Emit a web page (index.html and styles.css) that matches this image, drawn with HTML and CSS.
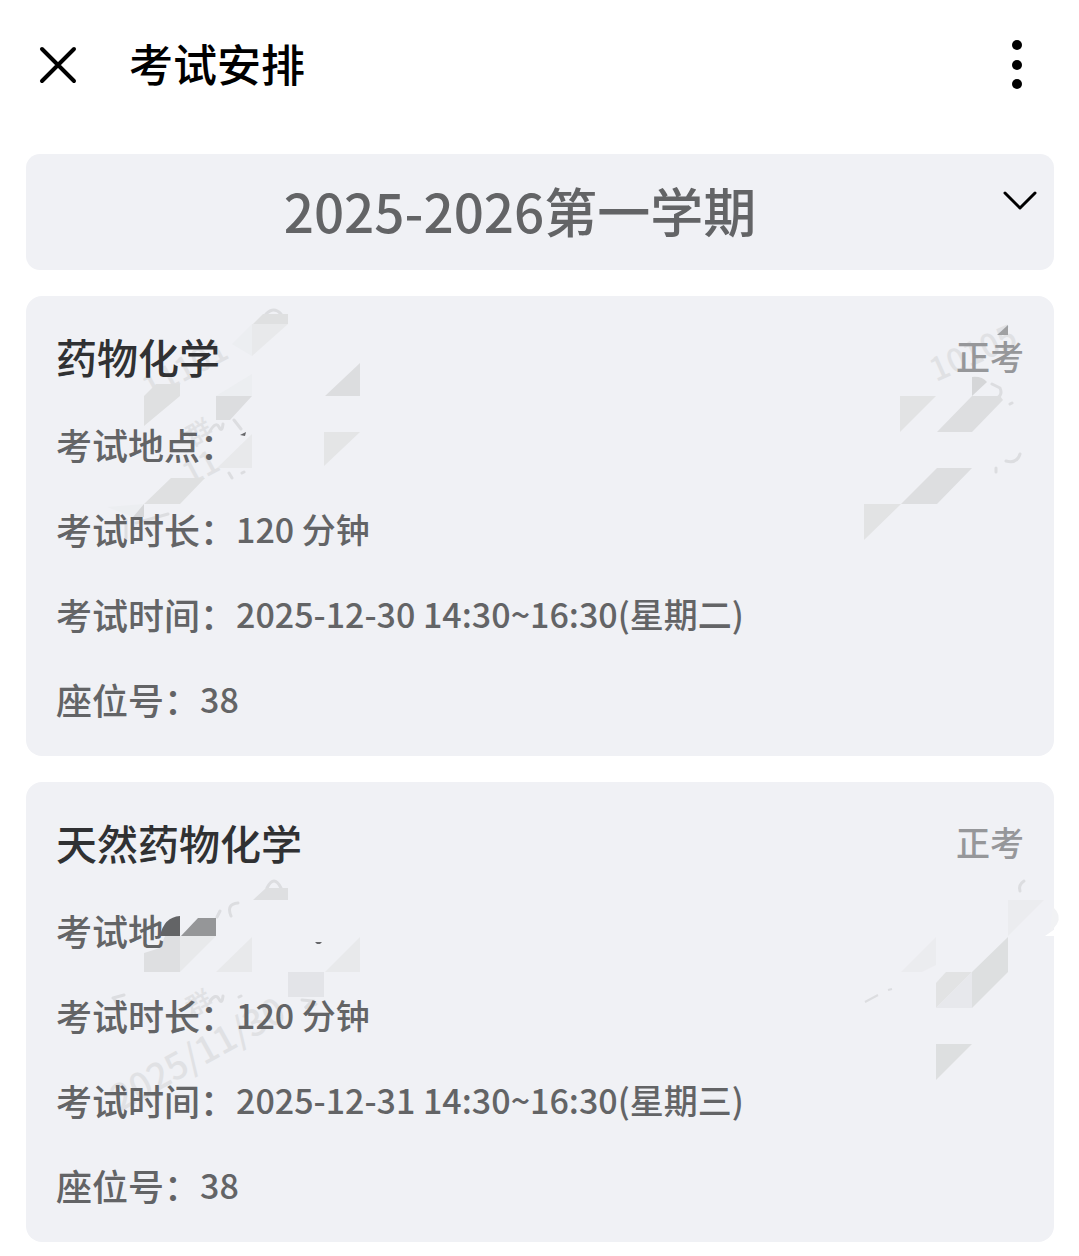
FILE: index.html
```html
<!DOCTYPE html>
<html lang="zh-CN">
<head>
<meta charset="utf-8">
<meta name="viewport" content="width=device-width, initial-scale=1">
<title>考试安排</title>
<link rel="stylesheet" href="styles.css">
</head>
<body>
<header class="topbar">
  <button class="icon-button" type="button" aria-label="关闭">
    <svg width="40" height="40" viewBox="0 0 40 40"><path d="M4 4 36 36M36 4 4 36" fill="none" stroke="#000" stroke-width="4" stroke-linecap="round"/></svg>
  </button>
  <h1 class="topbar-title">考试安排</h1>
  <button class="icon-button" type="button" aria-label="更多">
    <svg width="12" height="52" viewBox="0 0 12 52"><circle cx="6" cy="6" r="5"/><circle cx="6" cy="26" r="5"/><circle cx="6" cy="45" r="5"/></svg>
  </button>
</header>

<main class="content">
  <div class="term">
    <select class="term-select" aria-label="学期">
      <option>2025-2026第一学期</option>
    </select>
    <svg class="term-arrow" width="36" height="20" viewBox="0 0 36 20"><path d="M3 3 18 18 33 3" fill="none" stroke="#000" stroke-width="3" stroke-linecap="round" stroke-linejoin="round"/></svg>
  </div>

  <article class="exam">
    <svg class="marks marks-left" width="380" height="260" viewBox="26 296 380 260" aria-hidden="true">
      <g class="mark-text">
        <text transform="translate(150 400) rotate(-28)">11101</text>
        <text class="mark-small" transform="translate(192 447) rotate(-28)">群</text>
        <text transform="translate(190 486) rotate(-28)">11</text>
      </g>
      <path class="mark-line" d="M266 314Q274 306 281 314M210 431Q216 421 219 427T223 424M234 420 241 429M229 473 232 478M242 473 244 472M136 523 168 514M126 520V538"/>
      <path fill="#dfe0e1" d="M253 324 263 314H288V324ZM144 396 156 384H180V396L144 426ZM144 504 171 478H205L180 504Z"/>
      <path fill="#e8e9eb" d="M252 324H288L252 356ZM217 468 252 434V468Z"/>
      <path fill="#eceef1" d="M232 344 252 324V356ZM216 396 252 374V396ZM107 507 144 504 133 517Z"/>
      <path fill="#dcdddf" d="M216 396H252L230 420H216ZM325 396 360 363V396Z"/>
      <path fill="#e4e5e6" d="M324 432H360L324 466Z"/>
      <path fill="#d5d6d8" d="M133 517 144 504V517Z"/>
      <path fill="#66676a" d="M240 435 246 432 245 436Z"/>
    </svg>
    <svg class="marks marks-right" width="200" height="260" viewBox="854 296 200 260" aria-hidden="true">
      <g class="mark-text"><text transform="translate(936 382) rotate(-24)">10105</text></g>
      <path class="mark-line" d="M1006 461Q1017 464 1020 454M992 384 1000 388Q1003 395 997 398M1010 404 1012 403M996 468V472"/>
      <path fill="#9fa0a2" d="M997 335 1008 325V335Z"/>
      <path fill="#e2e3e4" d="M900 396H936L900 432ZM864 504H901L864 540Z"/>
      <path fill="#d5d6d8" d="M972 377Q982 376 987 382L972 396Z"/>
      <path fill="#dddee0" d="M937 432 972 396H1000L1003 400 972 432ZM901 504 937 468H972L937 504Z"/>
    </svg>
    <header class="exam-head">
      <h2 class="exam-name">药物化学</h2>
      <span class="exam-type">正考</span>
    </header>
    <dl class="exam-info">
      <div class="exam-row"><dt>考试地点：</dt><dd></dd></div>
      <div class="exam-row"><dt>考试时长：</dt><dd>120 分钟</dd></div>
      <div class="exam-row"><dt>考试时间：</dt><dd>2025-12-30 14:30~16:30(星期二)</dd></div>
      <div class="exam-row"><dt>座位号：</dt><dd>38</dd></div>
    </dl>
  </article>

  <article class="exam">
    <svg class="marks marks-left" width="380" height="340" viewBox="26 782 380 340" aria-hidden="true">
      <g class="mark-text">
        <text class="mark-large" transform="translate(120 1112) rotate(-29)">2025/11/30</text>
        <text class="mark-small" transform="translate(192 1018) rotate(-28)">群</text>
      </g>
      <path class="mark-line" d="M267 888Q274 874 281 888M231 916Q226 904 238 903M217 917 220 911M210 1001Q216 993 219 999T223 996M239 997 241 996M302 1000 312 1001 305 1008 316 1004M113 998 124 995M114 998 118 1006"/>
      <path fill="#dedfe1" d="M253 900 266 888H288V900ZM144 953 160 948 165 936H180V972H144Z"/>
      <path fill="#e8e9eb" d="M180 936H216L180 972ZM216 972 252 937V972ZM325 972 360 937V972Z"/>
      <path fill="#636466" d="M160 936Q164 917 180 916V936Z"/>
      <path fill="#959698" d="M181 936 198 918H216V936Z"/>
      <path fill="#e3e4e8" d="M288 972H324V997H288Z"/>
      <path fill="#66676a" d="M315 942H322L320 944H317Z"/>
    </svg>
    <svg class="marks marks-right" width="200" height="310" viewBox="854 782 200 310" aria-hidden="true">
      <path class="mark-line" d="M1024 881Q1018 885 1020 891"/>
      <path fill="none" stroke="#dcdde0" stroke-width="2" d="M865 1002 878 995M888 990 892 989"/>
      <path fill="#f1f2f4" d="M1053 907Q1062 915 1057 924L1050 933Z"/>
      <path fill="#fff" d="M1045 936 1055 929V936Z"/>
      <path fill="#ebecef" d="M1008 900H1044L1008 936ZM901 972 936 937V965L922 972Z"/>
      <path fill="#dddfe0" d="M972 972 1008 937V972L972 1008ZM936 1044H972L936 1080Z"/>
      <path fill="#e2e3e4" d="M936 983 946 972H972L936 1008Z"/>
      <path fill="#e7e8ec" d="M972 972V1008H936Z"/>
    </svg>
    <header class="exam-head">
      <h2 class="exam-name">天然药物化学</h2>
      <span class="exam-type">正考</span>
    </header>
    <dl class="exam-info">
      <div class="exam-row"><dt>考试地</dt><dd></dd></div>
      <div class="exam-row"><dt>考试时长：</dt><dd>120 分钟</dd></div>
      <div class="exam-row"><dt>考试时间：</dt><dd>2025-12-31 14:30~16:30(星期三)</dd></div>
      <div class="exam-row"><dt>座位号：</dt><dd>38</dd></div>
    </dl>
  </article>
</main>
</body>
</html>
```

FILE: styles.css
```css
* {
  box-sizing: border-box;
}

body {
  margin: 0;
  background: #fff;
  color: #636466;
  font-family: "Noto Sans CJK SC", sans-serif;
  font-weight: 500;
}

h1, h2, dl, dd {
  margin: 0;
}

button, select {
  padding: 0;
  border: 0;
  background: none;
  font: inherit;
  color: inherit;
}

svg {
  display: block;
}

.topbar {
  display: flex;
  align-items: center;
  height: 130px;
  padding: 0 56px 0 38px;
}

.icon-button {
  cursor: pointer;
}

.topbar-title {
  flex: 1;
  margin-left: 51px;
  padding-bottom: 4px;
  color: #000;
  font-size: 44px;
  font-weight: 500;
  line-height: 64px;
}

.content {
  display: flex;
  flex-direction: column;
  gap: 26px;
  padding: 24px 25px 14px 26px;
}

.term {
  position: relative;
}

.term-select {
  display: block;
  width: 100%;
  height: 116px;
  padding: 0 66px 4px 26px;
  border-radius: 14px;
  background: #f0f1f5;
  font-size: 53px;
  text-align: center;
  text-align-last: center;
  appearance: none;
}

.term-arrow {
  position: absolute;
  top: 36px;
  right: 16px;
  pointer-events: none;
}

.exam {
  position: relative;
  padding: 20px 30px 14px;
  border-radius: 16px;
  background: #f0f1f5;
}

.exam-head {
  position: relative;
  display: flex;
  align-items: center;
  justify-content: space-between;
  padding-bottom: 6px;
  line-height: 80px;
}

.exam-name {
  color: #303133;
  font-size: 41px;
  font-weight: 500;
}

.exam-type {
  color: #96979a;
  font-size: 34px;
}

.exam-info {
  position: relative;
}

.exam-row {
  display: flex;
  min-height: 85px;
  line-height: 84px;
}

.exam-row dt {
  font-size: 36px;
}

.exam-row dd {
  font-size: 34px;
}

/* Faded remains of the page watermark, behind the card text */
.marks {
  position: absolute;
  top: 0;
  overflow: visible;
  pointer-events: none;
}

.marks-left {
  left: 0;
}

.marks-right {
  right: 0;
}

.mark-text {
  fill: #e0e1e4;
  font-size: 32px;
}

.mark-small {
  font-size: 26px;
}

.mark-large {
  font-size: 36px;
}

.mark-line {
  fill: none;
  stroke: #dcdde0;
  stroke-width: 3;
  stroke-linecap: round;
}
```
